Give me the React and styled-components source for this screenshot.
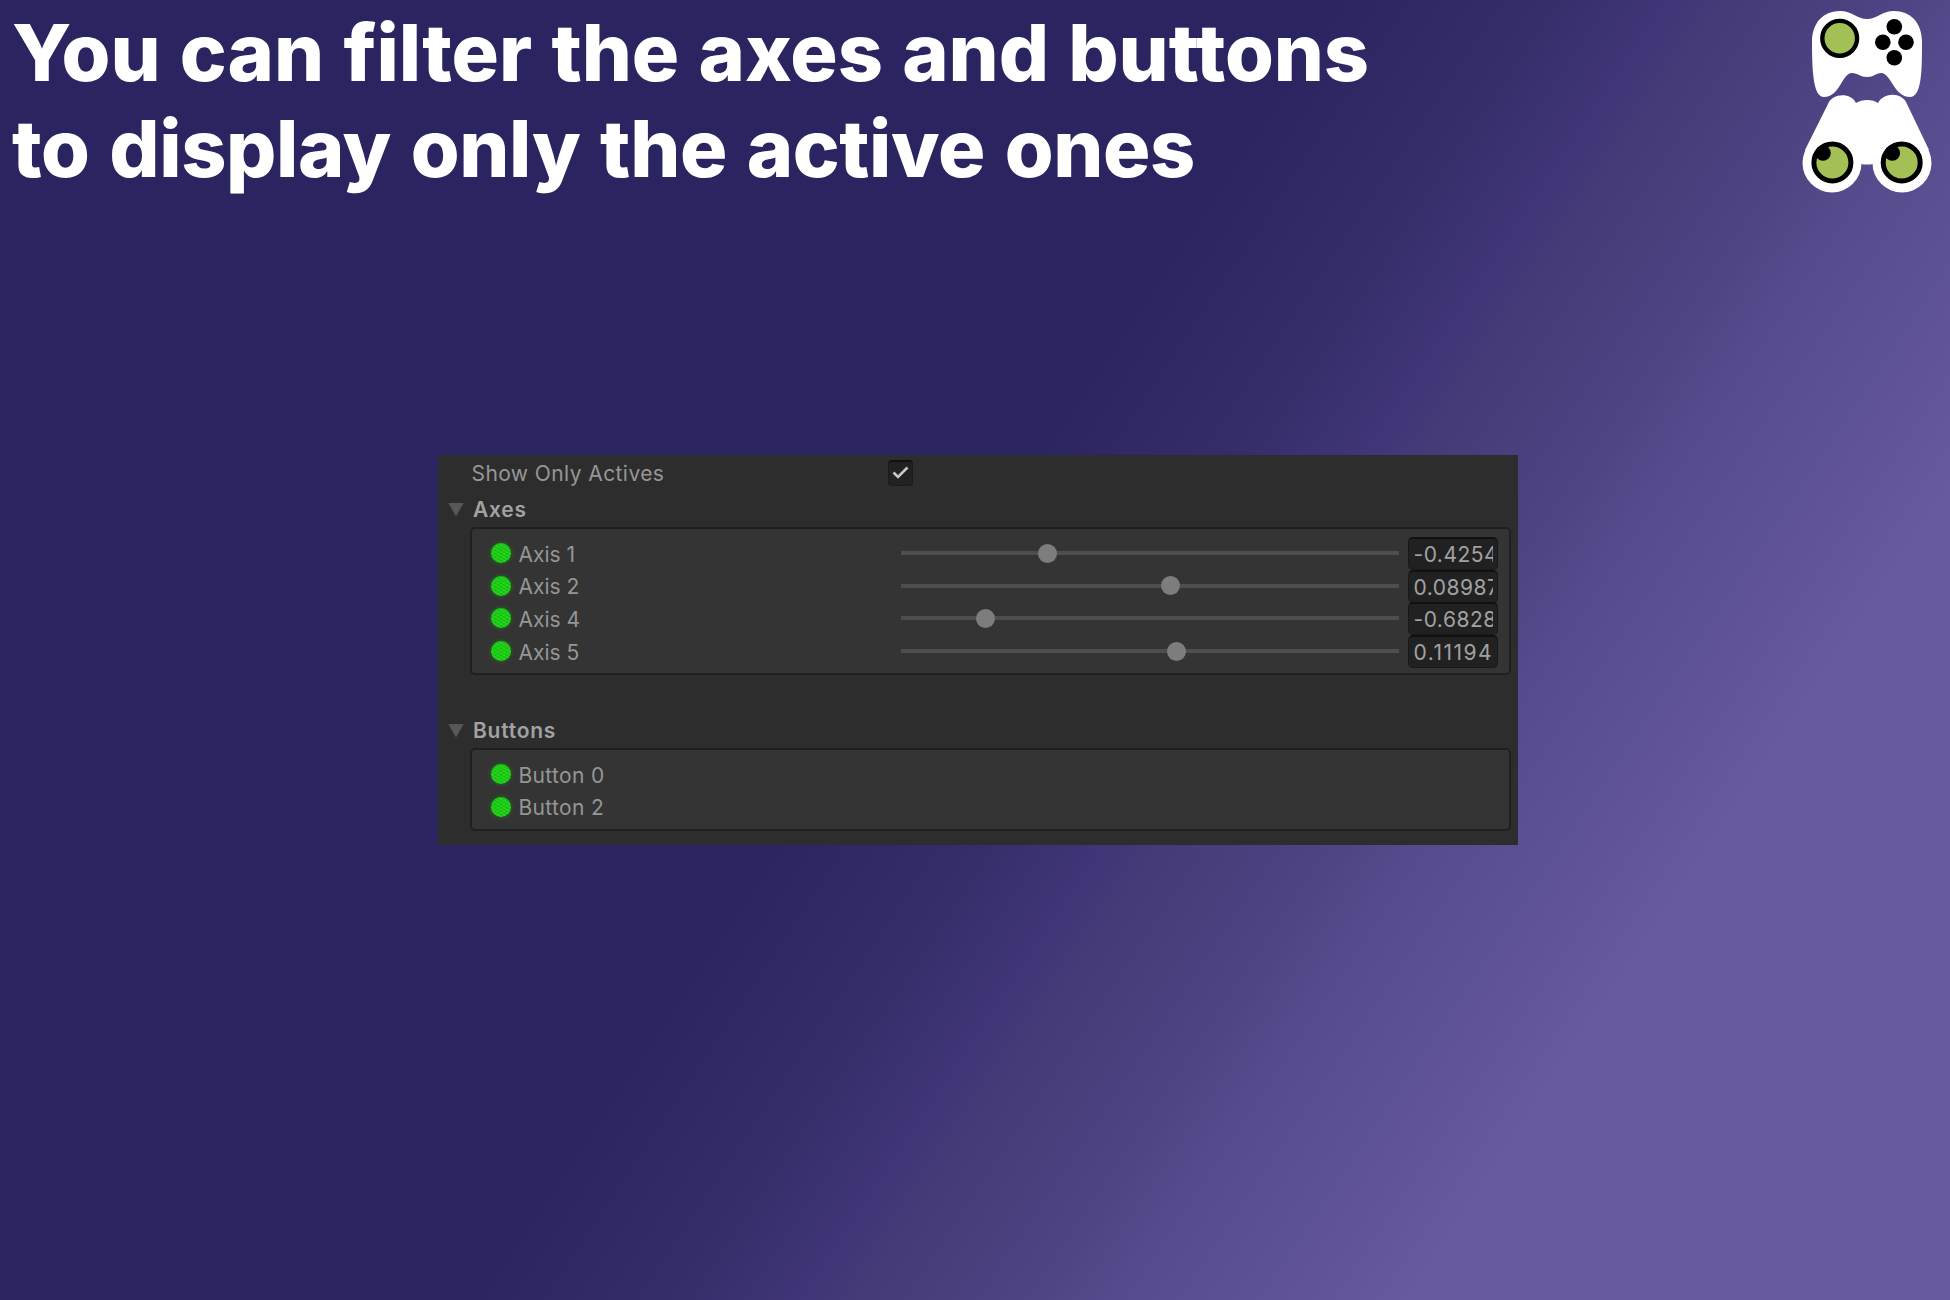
import React from "react";
import styled, { createGlobalStyle } from "styled-components";

const GlobalStyle = createGlobalStyle`
  * { box-sizing: border-box; }
  body { margin: 0; overflow: hidden; }
`;

const Page = styled.main`
  width: 1950px;
  height: 1300px;
  display: flex;
  flex-direction: column;
  background: linear-gradient(123.7deg, #2a2461 47%, #362e6b 55%, #403678 59.5%, #443a78 61%, #504584 68%, #544a8c 70%, #675a9d 81%);
  font-family: Inter, "Liberation Sans", sans-serif;
`;

const Header = styled.header`
  display: flex;
  justify-content: space-between;
  height: 455px;
  padding: 4px 15px 0 12px;
`;

const Title = styled.h1`
  margin: 0;
  color: #fff;
  font: 800 79px/96px Inter, "Open Sans", sans-serif;
  white-space: nowrap;
`;

const TitleLine = styled.span`
  display: block;
  width: max-content;
  letter-spacing: ${(p) => p.$spacing};
  word-spacing: ${(p) => p.$wordSpacing};
`;

const Logo = styled.svg`
  width: 134px;
  height: 190px;
  margin-top: 4px;
`;

const Inspector = styled.section`
  width: 1080px;
  height: 390px;
  margin-left: 438px;
  padding: 4px 7px 0 32px;
  background: #2d2d2d;
  color: #969696;
  font-size: 21px;
`;

const Setting = styled.label`
  display: flex;
  align-items: center;
  height: 30px;
  letter-spacing: 0.42px;
`;

const SettingName = styled.span`
  width: 418px;
  padding: 0 0 1px 1.5px;
`;

const Check = styled.span`
  display: flex;
  align-items: center;
  justify-content: center;
  width: 25px;
  height: 26px;
  margin-top: -3px;
  border: 1px solid #1b1b1b;
  border-top: 2px solid #111;
  border-radius: 4px;
  background: #212121;
`;

const Foldout = styled.div`
  display: flex;
  align-items: center;
  height: 31px;
  margin: ${(p) => p.$gap} 0 2px -22px;
  color: #a2a2a2;
  font-weight: 600;
  letter-spacing: 0.75px;
`;

const Triangle = styled.span`
  width: 16px;
  height: 14px;
  margin-right: 9px;
  background: #575757;
  clip-path: polygon(0 0, 100% 0, 50% 100%);
`;

const Group = styled.div`
  height: ${(p) => p.$height};
  padding: 9px 11px 0 20px;
  border: 2px solid #1f1f1f;
  border-radius: 5px;
  background: #343434;
`;

const Row = styled.div`
  display: flex;
  align-items: center;
  height: 32.6px;
`;

const Lamp = styled.span`
  width: 20px;
  height: 20px;
  flex: none;
  margin: -2px 7.5px 0 -1px;
  border-radius: 50%;
  background:
    repeating-linear-gradient(30deg, transparent 0 2px, rgba(80, 235, 70, 0.35) 2px 3px),
    repeating-linear-gradient(-30deg, #14c40e 0 2px, #1fcc18 2px 3px);
  box-shadow: 0 0 4px rgba(24, 190, 16, 0.5);
`;

const RowName = styled.span`
  width: 382.5px;
  letter-spacing: ${(p) => p.$spacing || "0"};
`;

const Slider = styled.div`
  display: flex;
  align-items: center;
  width: 498px;
  height: 4px;
  margin-top: -2px;
  background: #4e4e4e;
`;

const Knob = styled.span`
  width: 19px;
  height: 19px;
  flex: none;
  border-radius: 50%;
  background: #7d7d7d;
`;

const Field = styled.div`
  width: 90px;
  height: 33px;
  margin: -1px 0 0 9px;
  padding: 0 4px 0 4.5px;
  border: 1px solid #191919;
  border-top: 2px solid #101010;
  border-radius: 5px;
  background: #212121;
`;

const FieldValue = styled.span`
  display: block;
  overflow: hidden;
  white-space: nowrap;
  line-height: 31px;
  color: #a2a2a2;
  letter-spacing: ${(p) => p.$spacing};
`;

const axes = [
  { name: "Axis 1", value: "-0.4254", left: 137, spacing: "0.5px" },
  { name: "Axis 2", value: "0.08987", left: 260, spacing: "0.5px" },
  { name: "Axis 4", value: "-0.6828", left: 75, spacing: "0.5px" },
  { name: "Axis 5", value: "0.11194", left: 265.5, spacing: "1.5px" },
];

const buttons = ["Button 0", "Button 2"];

function BrandLogo() {
  return (
    <Logo viewBox="1801 8 134 190">
      <g fill="#fff">
        <path d="M1812 42C1812 22 1824 11 1840 11C1852 11 1857 19 1867 19C1877 19 1882 11 1894 11C1910 11 1922 22 1922 42C1922 69 1922 97 1910 97C1894 97 1891 73 1881 73C1876 73 1874 77 1867 77C1860 77 1858 73 1852 73C1842 73 1840 97 1824 97C1814 97 1812 76 1812 42Z" />
        <path d="M1828 104C1832 93 1851 92 1856 103C1862 99 1873 99 1878 103C1884 92 1902 92 1907 104L1929 150L1873 164Q1867 165 1861 164L1805 150Z" />
        <circle cx="1832" cy="163" r="29.5" />
        <circle cx="1902" cy="163" r="29.5" />
      </g>
      <g fill="#a2c056" stroke="#000">
        <circle cx="1839.7" cy="38.3" r="17.4" strokeWidth="4.4" />
        <circle cx="1832.4" cy="162.5" r="18.5" strokeWidth="5" />
        <circle cx="1901.7" cy="162.5" r="18.5" strokeWidth="5" />
      </g>
      <circle cx="1894.3" cy="26.8" r="7.8" />
      <circle cx="1882.8" cy="42.3" r="7.8" />
      <circle cx="1906" cy="42.3" r="7.8" />
      <circle cx="1894.3" cy="57.8" r="7.8" />
      <circle cx="1823" cy="153" r="7.8" />
      <circle cx="1892.3" cy="153" r="7.8" />
    </Logo>
  );
}

export default function App() {
  return (
    <Page>
      <GlobalStyle />
      <Header>
        <Title>
          <TitleLine $spacing="-0.1px" $wordSpacing="2.2px">
            You can filter the axes and buttons
          </TitleLine>
          <TitleLine $spacing="-0.4px" $wordSpacing="2.8px">
            to display only the active ones
          </TitleLine>
        </Title>
        <BrandLogo />
      </Header>
      <Inspector>
        <Setting>
          <SettingName>Show Only Actives</SettingName>
          <Check>
            <svg width="17" height="14" viewBox="0 0 17 14" fill="none" stroke="#c8c8c8" strokeWidth="2.6">
              <path d="M1.5 6.5 6 11 15.5 1.5" />
            </svg>
          </Check>
        </Setting>
        <Foldout $gap="5px">
          <Triangle />
          Axes
        </Foldout>
        <Group $height="148px">
          {axes.map((axis) => (
            <Row key={axis.name}>
              <Lamp />
              <RowName>{axis.name}</RowName>
              <Slider>
                <Knob style={{ marginLeft: axis.left }} />
              </Slider>
              <Field>
                <FieldValue $spacing={axis.spacing}>{axis.value}</FieldValue>
              </Field>
            </Row>
          ))}
        </Group>
        <Foldout $gap="40px">
          <Triangle />
          Buttons
        </Foldout>
        <Group $height="83px">
          {buttons.map((name) => (
            <Row key={name}>
              <Lamp />
              <RowName $spacing="0.35px">{name}</RowName>
            </Row>
          ))}
        </Group>
      </Inspector>
    </Page>
  );
}
